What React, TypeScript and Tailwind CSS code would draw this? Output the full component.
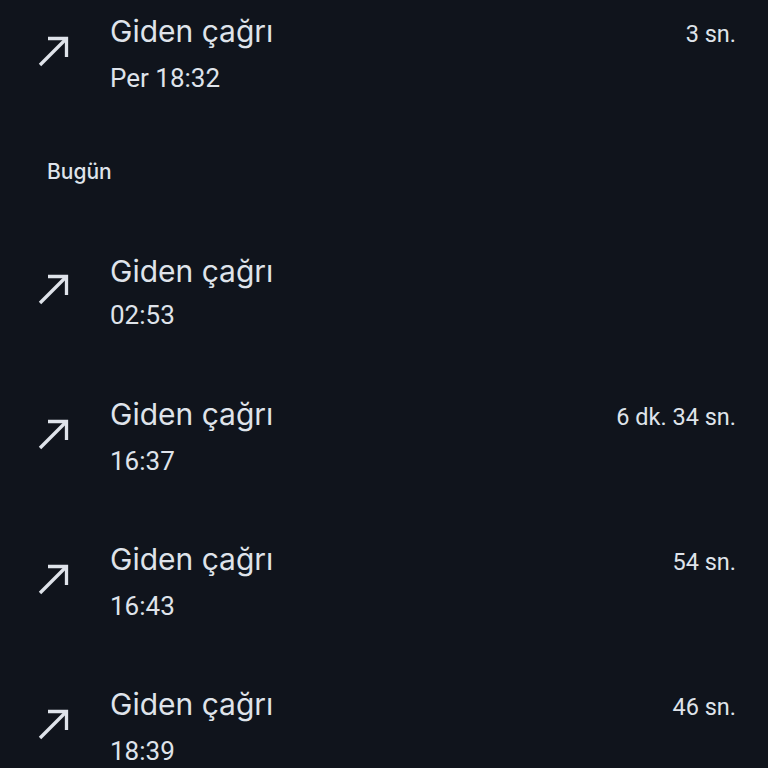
import React from "react";

type Call = { time: string; dur?: string };

const Arrow = () => (
  <svg width="34" height="34" viewBox="0 0 34 34" fill="none" stroke="#dfe3ea" strokeWidth="3.3">
    <line x1="3" y1="30" x2="29.5" y2="3.5" strokeLinecap="butt" />
    <polyline points="11,3.5 29.5,3.5 29.5,22" strokeLinecap="butt" strokeLinejoin="miter" />
  </svg>
);

const Row = ({ c }: { c: Call }) => (
  <div className="flex h-[145px] items-center">
    <div className="w-[110px] shrink-0 pl-[37px] mb-[6px]">
      <Arrow />
    </div>
    <div className="flex flex-1 flex-col gap-[8px]">
      <div className="flex items-baseline justify-between pr-[32px]">
        <span
          className="text-[30px] leading-[36px] text-[#dfe3ea]"
          style={{ fontFamily: "Inter, Roboto, sans-serif" }}
        >
          Giden çağrı
        </span>
        {c.dur && <span className="text-[23.5px] leading-[36px] text-[#dfe3ea]">{c.dur}</span>}
      </div>
      <span className="text-[26px] leading-[36px] text-[#dfe3ea]">{c.time}</span>
    </div>
  </div>
);

export default function App() {
  const today: Call[] = [
    { time: "02:53" },
    { time: "16:37", dur: "6 dk. 34 sn." },
    { time: "16:43", dur: "54 sn." },
    { time: "18:39", dur: "46 sn." },
  ];
  return (
    <div
      className="h-[768px] w-[768px] overflow-hidden bg-[#10141c]"
      style={{ fontFamily: "Roboto, 'Noto Sans', sans-serif" }}
    >
      <div className="-mt-[18px]">
        <Row c={{ time: "Per 18:32", dur: "3 sn." }} />
        <div className="flex h-[93px] items-start pl-[47px] pt-[33px]">
          <span
            className="text-[21px] font-medium leading-[24px] text-[#dfe3ea]"
            style={{ fontFamily: "Inter, Roboto, sans-serif" }}
          >
            Bugün
          </span>
        </div>
        {today.map((c, i) => (
          <Row key={i} c={c} />
        ))}
      </div>
    </div>
  );
}
